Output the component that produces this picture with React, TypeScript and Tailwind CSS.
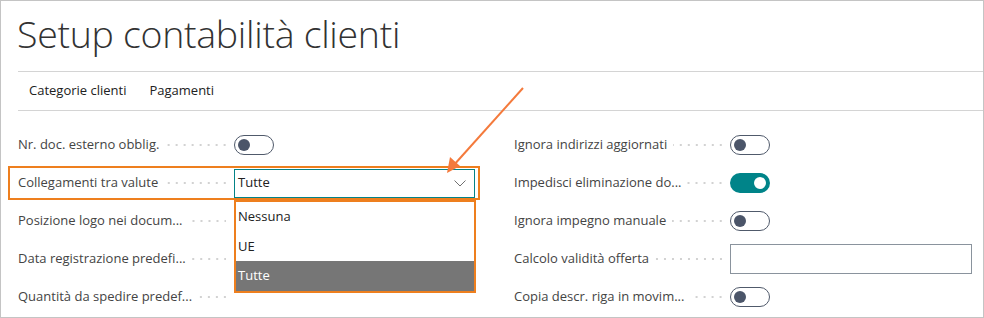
import React from "react";

const Toggle = ({ on = false }: { on?: boolean }) =>
  on ? (
    <div className="w-[40px] h-[20px] rounded-full bg-[#008489] flex items-center justify-end pr-[4px]">
      <div className="w-[12px] h-[12px] rounded-full bg-white" />
    </div>
  ) : (
    <div className="w-[40px] h-[20px] rounded-full border-[1.5px] border-[#505a6b] flex items-center pl-[3px]">
      <div className="w-[12px] h-[12px] rounded-full bg-[#4b5569]" />
    </div>
  );

const Dots = () => (
  <div className="flex-1 h-[2px] mx-[6px] bg-[linear-gradient(to_right,transparent_6px,#d2d2d2_6px)] bg-[length:8px_2px] bg-repeat-x bg-right" />
);

const Row = ({
  label,
  children,
  extra,
}: {
  label: string;
  children?: React.ReactNode;
  extra?: React.ReactNode;
}) => (
  <div className="relative h-[38px] flex items-center">
    <div className="w-[216px] flex items-center pr-[2px]">
      <span className="text-[13px] text-[#444444] whitespace-nowrap">{label}</span>
      <Dots />
    </div>
    <div className="flex-1 flex items-center">{children}</div>
    {extra}
  </div>
);

export default function App() {
  return (
    <div className="relative w-[984px] h-[318px] bg-white border border-[#c4c4c4] overflow-hidden font-['Open_Sans',sans-serif]">
      <div className="pl-[16px] h-[70px] pt-[5px]">
        <h1 className="text-[37.5px] font-light text-[#323232] leading-[56px] tracking-[-0.3px]">
          Setup contabilità clienti
        </h1>
      </div>
      <div className="ml-[17px] border-t border-[#d4d4d4]" />
      <div className="ml-[17px] h-[38px] flex items-center gap-[23px] pl-[11px] text-[13px] text-[#212121]">
        <span>Categorie clienti</span>
        <span>Pagamenti</span>
      </div>
      <div className="ml-[17px] border-t border-[#d4d4d4]" />

      <div className="pt-[15px] pl-[17px] grid grid-cols-[458px_458px] gap-x-[38px]">
        <div className="flex flex-col">
          <Row label="Nr. doc. esterno obblig.">
            <Toggle />
          </Row>
          <Row
            label="Collegamenti tra valute"
            extra={
              <>
                <div className="absolute left-[-10px] top-[2px] w-[472px] h-[34px] border-2 border-[#ee7f1e] pointer-events-none" />
                <div className="absolute left-[216px] top-[36px] w-[242px] h-[93px] border-2 border-[#ee7f1e] bg-white flex flex-col text-[13px] text-[#212121] z-10">
                  <div className="h-[30px] flex items-center pl-[2px]">Nessuna</div>
                  <div className="h-[29px] flex items-center pl-[2px]">UE</div>
                  <div className="flex-1 flex items-center pl-[2px] bg-[#767676] text-white">Tutte</div>
                </div>
              </>
            }
          >
            <div className="w-[241px] h-[29px] border border-[#038387] flex items-center justify-between pl-[3px] pr-[8px] text-[13px] text-[#212121]">
              <span>Tutte</span>
              <svg width="12" height="7" viewBox="0 0 12 7" className="mt-[1px]">
                <path d="M0.5 0.5 L6 6 L11.5 0.5" fill="none" stroke="#707070" strokeWidth="1" />
              </svg>
            </div>
          </Row>
          <Row label="Posizione logo nei docum...">
            <div className="w-[241px] h-[29px]" />
          </Row>
          <Row label="Data registrazione predefi..." />
          <Row label="Quantità da spedire predef..." />
        </div>
        <div className="flex flex-col">
          <Row label="Ignora indirizzi aggiornati">
            <Toggle />
          </Row>
          <Row label="Impedisci eliminazione do...">
            <Toggle on />
          </Row>
          <Row label="Ignora impegno manuale">
            <Toggle />
          </Row>
          <Row label="Calcolo validità offerta">
            <div className="w-[242px] h-[30px] border-[1.5px] border-[#8a939d]" />
          </Row>
          <Row label="Copia descr. riga in movim...">
            <Toggle />
          </Row>
        </div>
      </div>

      <svg className="absolute left-0 top-0 pointer-events-none" width="984" height="318">
        <line x1="522" y1="87" x2="452" y2="165" stroke="#f47a3c" strokeWidth="2" />
        <polygon points="446,172 449,156 459,165" fill="#f47a3c" />
      </svg>
    </div>
  );
}
